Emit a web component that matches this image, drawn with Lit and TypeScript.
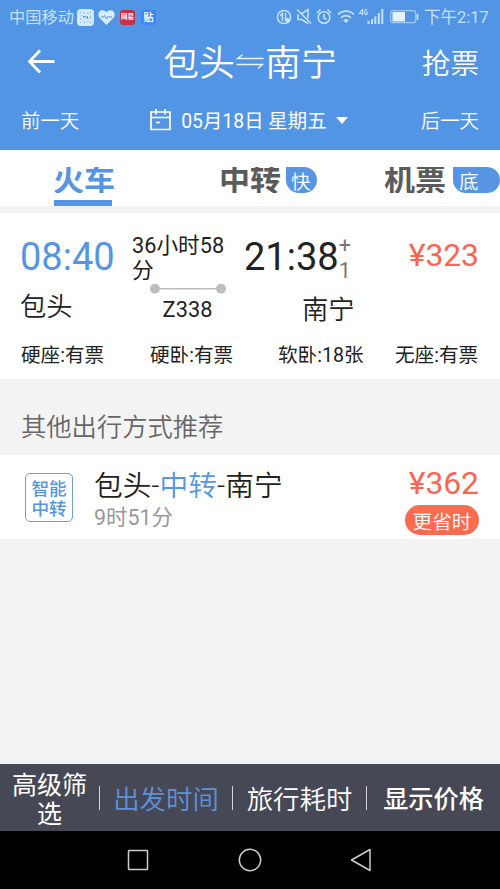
import { LitElement, html, css, svg } from "lit";
import { customElement } from "lit/decorators.js";

@customElement("status-bar")
class StatusBar extends LitElement {
  static styles = css`
    :host { display: flex; align-items: center; height: 34px; padding: 0 12px 0 9px; color: #c4e2ff; font-size: 16.3px; line-height: 32px; white-space: nowrap; }
    .carrier { width: 68px; padding-top: 2px; }
    .spacer { flex: 1; }
    .tile { display: flex; align-items: center; justify-content: center; width: 15px; height: 15px; border-radius: 3px; overflow: hidden; font-weight: 700; line-height: 15px; color: #fff; }
    .red { background: #c92f48; font-size: 6.5px; margin-left: 5px; }
    .blue { background: #3b87f5; font-size: 10px; margin-left: 6px; }
    .clock { width: 64px; text-align: right; font-size: 16.5px; padding-top: 2px; }
    svg { display: block; flex: none; }
    .heart { margin-left: 4px; }
  `;
  render() {
    return html`
      <span class="carrier">中国移动</span>
      <svg width="17" height="17" viewBox="0 0 17 17"><rect width="17" height="17" rx="4" fill="#d3eaff"/><circle cx="8.5" cy="8.5" r="4.7" fill="none" stroke="#78aee8" stroke-width="1" stroke-dasharray="1.5 2.4"/><path d="M6.5 9V7.5H9V9M10.5 7v3" fill="none" stroke="#5d9ae2"/><path d="M3 3.5h1M13 3.5h1M3 13.5h1M13 13.5h1" stroke="#78aee8"/></svg>
      <svg class="heart" width="17" height="15" viewBox="0 0 17 15"><path d="M8.5 15L1.4 7.8C-1 4.8.8.3 4.7.3c1.8 0 3 .9 3.8 2 .8-1.1 2-2 3.8-2 3.900 0 5.700 4.500 3.300 7.500Z" fill="#d8eeff"/><path d="M3 7h2.500l1-1.500 2 3.500 1.800-3 1 1H14" fill="none" stroke="#5295e3" stroke-width="1"/></svg>
      <span class="tile red">网易</span>
      <span class="tile blue">贴</span>
      <span class="spacer"></span>
      <svg width="148" height="20" viewBox="276 7 148 20" fill="none" stroke="#c4e2ff" stroke-width="1.500">
        <circle cx="284" cy="17" r="6.600"/><path d="M282.300 21V13.500l-2.300 2.300M285.500 13v7.300l2.500-2.300"/><circle cx="288" cy="20.500" r="2.300" fill="#c4e2ff" stroke="none"/>
        <path d="M298 14v5.500h3.500l6.500 4M301 14l7-4.500v9M297 9.500l14 14"/>
        <circle cx="324" cy="17.500" r="5.800"/><path d="M324 14v4l2.500 1.500M317 13l3.500-3.500M331 13l-3.500-3.500"/>
        <path d="M338 14.500c4.500-4.600 11.500-4.600 16 0M341 17.800c2.900-2.900 7.100-2.900 10 0" stroke-width="1.700"/><path d="M343.300 20.300c1.700-1.600 3.700-1.600 5.400 0L346 23.300Z" fill="#c4e2ff" stroke="none"/>
        <path d="M362.500 9l-3 4.500h4M362.500 9v6.500M367 10c-1-1.200-2.500-.5-2.500 2s1.500 3.500 2.700 2v-2h-1.200" stroke-width="1.100"/>
        <path d="M368.500 21v3M372 19v5M375.300 16.500V24M378.800 13v11M382.300 9v15" stroke-width="2"/>
        <rect x="390.700" y="10.700" width="25" height="12" rx="2.500" stroke="#9ccaf9" stroke-width="1.200"/><rect x="392.500" y="12" width="12.500" height="9.500" fill="#e3f2ff" stroke="none"/><path d="M417.500 14v6" stroke-width="1.700"/>
      </svg>
      <span class="clock">下午2:17</span>
    `;
  }
}

@customElement("search-header")
class SearchHeader extends LitElement {
  static styles = css`
    :host { display: block; height: 116px; color: #fff; }
    svg { display: block; flex: none; }
    .top { display: flex; align-items: center; height: 56px; padding: 0 21px 0 27px; }
    .title { display: flex; align-items: center; font-size: 36px; line-height: 52px; margin-left: 108px; padding-top: 4px; font-weight: 350; }
    .grab { margin-left: auto; font-size: 28.600px; line-height: 53px; padding-top: 4px; font-weight: 350; }
    .days { display: flex; align-items: center; height: 60px; padding: 0 21px; font-size: 19.400px; line-height: 56px; font-weight: 350; white-space: nowrap; }
    .days span { padding-top: 3px; }
    .date { display: flex; align-items: center; margin-left: 71px; font-weight: 400; }
    .date span { margin: 0 9px 0 10px; }
    .next { margin-left: auto; }
  `;
  render() {
    return html`
      <div class="top">
        <svg width="28" height="26" viewBox="0 0 28 26" fill="none" stroke="#fff" stroke-width="2.800"><path d="M27.500 12.500H2.500M13 1.500L2.500 12.500l10.500 11"/></svg>
        <div class="title">包头<svg width="30" height="20" viewBox="0 0 30 20" fill="none" stroke="#e8f4ff" stroke-width="1.400"><path d="M28.500 4.500H2.500L7.500 .800M1.500 10.500h26L23 14.500"/></svg>南宁</div>
        <span class="grab">抢票</span>
      </div>
      <div class="days">
        <span>前一天</span>
        <div class="date">
          <svg width="21" height="22" viewBox="0 0 21 22" fill="none" stroke="#fff" stroke-width="1.700"><path d="M1 3h19v17.500H1zM1 8.500h19M6 0v5.500M15 0v5.500M6 13.500h4"/></svg>
          <span>05月18日 星期五</span>
          <svg width="12" height="7" viewBox="0 0 12 7"><path d="M0 0h12L6 7z" fill="#fff"/></svg>
        </div>
        <span class="next">后一天</span>
      </div>
    `;
  }
}

@customElement("transport-tabs")
class TransportTabs extends LitElement {
  static styles = css`
    :host { display: grid; grid-template-columns: 166px 165px 169px; height: 56px; background: #fff; border-bottom: 7px solid #f3f3f3; }
    .tab { display: flex; align-items: flex-start; padding: 17px 0 0 53px; color: #5b5b5b; }
    .label { height: 26px; overflow: hidden; font-size: 31px; line-height: 28px; font-weight: 700; white-space: nowrap; }
    .active { flex-direction: column; color: #5595e4; }
    .line { width: 58px; height: 6px; margin: 7px 0 0 1px; background: #5595e4; }
    .badge { box-sizing: border-box; height: 26px; width: 31px; margin-left: 5px; padding-left: 5px; border-radius: 0 13px 13px 13px; background: #5595e4; color: #fff; font-size: 19.500px; line-height: 31px; font-weight: 350; }
    .wide { width: 47px; margin-left: 7px; padding-left: 6px; }
  `;
  render() {
    return html`
      <div class="tab active"><span class="label">火车</span><span class="line"></span></div>
      <div class="tab"><span class="label">中转</span><span class="badge">快</span></div>
      <div class="tab"><span class="label">机票</span><span class="badge wide">底</span></div>
    `;
  }
}

@customElement("train-card")
class TrainCard extends LitElement {
  static styles = css`
    :host { display: flex; flex-direction: column; height: 166px; background: #fff; color: #222; }
    .trip { display: grid; grid-template-columns: 112px 112px 111px 1fr; height: 122px; padding: 0 21px 0 20px; }
    .time { font-size: 38px; line-height: 44px; margin-top: 22px; white-space: nowrap; }
    .depart { color: #5595e4; }
    .city { font-size: 26.300px; line-height: 30px; margin-top: 13px; font-weight: 350; }
    .arrive-city { margin: 16px 0 0 58px; }
    .middle { display: flex; flex-direction: column; align-items: center; }
    .length { align-self: flex-start; margin: 20px 0 0 0; font-size: 21.700px; line-height: 25px; white-space: nowrap; }
    .middle svg { display: block; margin: 0 0 0 -1px; }
    .number { font-size: 21.800px; line-height: 26px; margin-top: 2px; margin-left: -1px; }
    .arrive { display: flex; }
    .day { display: flex; flex-direction: column; margin: 20px 0 -6px 0; font-size: 21.500px; line-height: 25px; color: #777; }
    .price { color: #fa6450; font-size: 31.800px; line-height: 40px; margin-top: 22px; text-align: right; }
    .seats { display: grid; grid-template-columns: 129px 128px 117px auto; padding: 0 20px 0 21px; font-size: 19.600px; line-height: 41px; white-space: nowrap; }
  `;
  render() {
    const seats = ["硬座:有票", "硬卧:有票", "软卧:18张", "无座:有票"];
    return html`
      <div class="trip">
        <div><div class="time depart">08:40</div><div class="city">包头</div></div>
        <div class="middle">
          <div class="length">36小时58<br>分</div>
          <svg width="78" height="12" viewBox="0 0 78 12" fill="#bdbdbd"><path d="M5 5h66v1.500H5z"/><circle cx="6" cy="5.700" r="5"/><circle cx="72" cy="5.700" r="5"/></svg>
          <div class="number">Z338</div>
        </div>
        <div>
          <div class="arrive"><div class="time">21:38</div><div class="day"><span>+</span><span>1</span></div></div>
          <div class="city arrive-city">南宁</div>
        </div>
        <div class="price">¥323</div>
      </div>
      <div class="seats">${seats.map((s) => html`<span>${s}</span>`)}</div>
    `;
  }
}

@customElement("transfer-row")
class TransferRow extends LitElement {
  static styles = css`
    :host { display: block; }
    .heading { height: 76px; padding: 0 21px; font-size: 25.300px; line-height: 97px; color: #666; font-weight: 350; }
    .row { display: flex; height: 84px; padding: 0 21px 0 25px; background: #fff; }
    .logo { box-sizing: border-box; width: 48px; height: 49px; margin-top: 18px; padding-top: 6px; border: 1px solid #6e9fdd; border-radius: 5px; color: #5595e4; font-size: 17.600px; line-height: 19.500px; font-weight: 500; text-align: center; }
    .info { margin-left: 21px; }
    .name { font-size: 28.700px; line-height: 36px; margin-top: 13px; color: #222; font-weight: 350; }
    .name em { font-style: normal; color: #5595e4; }
    .length { font-size: 21.400px; line-height: 28px; margin-top: 0; color: #999; }
    .cost { display: flex; flex-direction: column; align-items: flex-end; margin-left: auto; }
    .price { color: #fa6450; font-size: 31.800px; line-height: 40px; margin-top: 8px; }
    .pill { width: 74px; height: 30px; margin-top: 2px; border-radius: 15px; background: #fa6c50; color: #fff; font-size: 19.600px; line-height: 35px; text-align: center; font-weight: 350; }
  `;
  render() {
    return html`
      <div class="heading">其他出行方式推荐</div>
      <div class="row">
        <div class="logo">智能<br>中转</div>
        <div class="info"><div class="name">包头-<em>中转</em>-南宁</div><div class="length">9时51分</div></div>
        <div class="cost"><span class="price">¥362</span><span class="pill">更省时</span></div>
      </div>
    `;
  }
}

@customElement("filter-bar")
class FilterBar extends LitElement {
  static styles = css`
    :host { display: grid; grid-template-columns: 99px 1px 132px 1px 133px 1px 133px; align-items: center; height: 67px; background: #474855; color: #fff; text-align: center; white-space: nowrap; }
    .stack { font-size: 25px; line-height: 28.500px; padding-top: 6px; }
    .sort { font-size: 26.400px; line-height: 62px; padding-top: 5px; font-weight: 350; }
    .on { color: #5c93dc; }
    .show { font-size: 25.200px; line-height: 62px; padding-top: 5px; font-weight: 500; }
    .rule { height: 24px; background: #d5d5dc; }
  `;
  render() {
    return html`
      <span class="stack">高级筛<br>选</span><i class="rule"></i>
      <span class="sort on">出发时间</span><i class="rule"></i>
      <span class="sort">旅行耗时</span><i class="rule"></i>
      <span class="show">显示价格</span>
    `;
  }
}

@customElement("system-nav")
class SystemNav extends LitElement {
  static styles = css`
    :host { display: flex; justify-content: center; align-items: center; gap: 88px; height: 58px; background: #000; }
    svg { display: block; }
  `;
  render() {
    const icons = [
      svg`<rect x="2.500" y="2.500" width="19" height="19" rx=".500"/>`,
      svg`<circle cx="12" cy="12" r="10.700"/>`,
      svg`<path d="M20 1.500v21L1.500 12Z"/>`,
    ];
    return icons.map((i) => html`<svg width="24" height="24" viewBox="0 0 24 24" fill="none" stroke="#ccc" stroke-width="1.500" stroke-linejoin="round">${i}</svg>`);
  }
}

@customElement("app-root")
class AppRoot extends LitElement {
  static styles = css`
    :host { display: flex; flex-direction: column; width: 500px; height: 889px; overflow: hidden; background: #f3f3f3; font-family: Roboto, "Noto Sans CJK SC", sans-serif; }
    .blue { background: #5295e5; }
    .fill { flex: 1; }
  `;
  render() {
    return html`
      <div class="blue"><status-bar></status-bar><search-header></search-header></div>
      <transport-tabs></transport-tabs>
      <train-card></train-card>
      <transfer-row></transfer-row>
      <div class="fill"></div>
      <filter-bar></filter-bar>
      <system-nav></system-nav>
    `;
  }
}
